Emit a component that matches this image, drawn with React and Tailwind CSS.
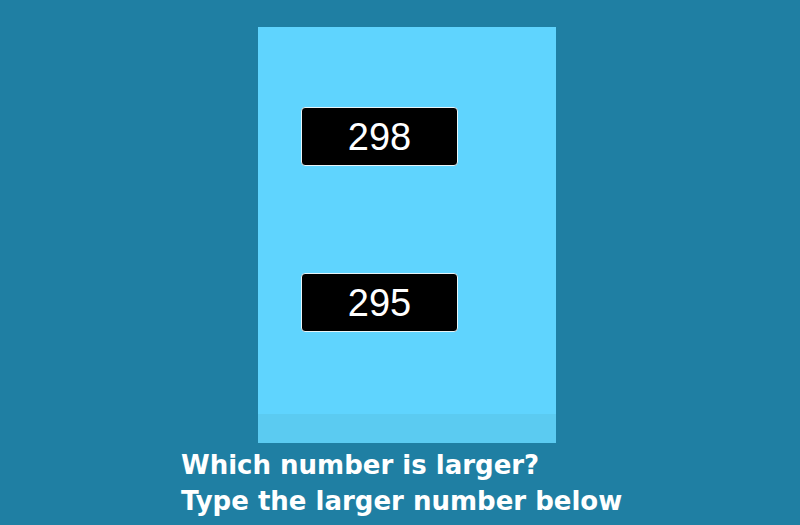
import React from "react";

const NumberBox = ({ value }) => (
  <div className="ml-[43px] flex h-[59px] w-[157px] items-center justify-center rounded-[4px] border border-[#e8f4f8] bg-black">
    <span className="text-[38px] leading-none text-white font-['Liberation_Sans',Arial,sans-serif]">
      {value}
    </span>
  </div>
);

const App = () => {
  return (
    <div className="h-[525px] w-[800px] overflow-hidden bg-[#1f7fa3]">
      <div className="pl-[258px] pt-[27px]">
        <div className="flex h-[416px] w-[298px] flex-col bg-[#5fd4fe]">
          <div className="flex flex-1 flex-col pt-[80px]">
            <NumberBox value={298} />
            <div className="h-[107px]" />
            <NumberBox value={295} />
          </div>
          <div className="h-[29px] bg-[#5bcbf1]" />
        </div>
      </div>
      <div className="pl-[181px] pt-[4px] text-[26px] font-bold leading-[36px] text-white font-['DejaVu_Sans',sans-serif]">
        <p>Which number is larger?</p>
        <p>Type the larger number below</p>
      </div>
    </div>
  );
};

export default App;
